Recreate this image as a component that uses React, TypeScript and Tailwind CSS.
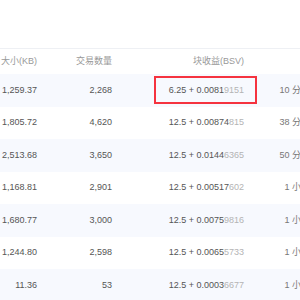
import React from 'react';

interface BlockRow {
  size: string;
  txCount: string;
  reward: string;
  feeStrong: string;
  feeLight: string;
  time: string;
}

const rows: BlockRow[] = [
  { size: '1,259.37', txCount: '2,268', reward: '6.25', feeStrong: '0.0081', feeLight: '9151', time: '10 分钟前' },
  { size: '1,805.72', txCount: '4,620', reward: '12.5', feeStrong: '0.00874', feeLight: '815', time: '38 分钟前' },
  { size: '2,513.68', txCount: '3,650', reward: '12.5', feeStrong: '0.0144', feeLight: '6365', time: '50 分钟前' },
  { size: '1,168.81', txCount: '2,901', reward: '12.5', feeStrong: '0.00517', feeLight: '602', time: '1 小时前' },
  { size: '1,680.77', txCount: '3,000', reward: '12.5', feeStrong: '0.0075', feeLight: '9816', time: '1 小时前' },
  { size: '1,244.80', txCount: '2,598', reward: '12.5', feeStrong: '0.0065', feeLight: '5733', time: '1 小时前' },
  { size: '11.36', txCount: '53', reward: '12.5', feeStrong: '0.0003', feeLight: '6677', time: '1 小时前' },
];

const cols = 'grid grid-cols-[37px_75px_132px_75px] items-center';

export default function App() {
  return (
    <div
      className="w-[300px] h-[300px] overflow-hidden bg-white text-[9px] text-[#555]"
      style={{ fontFamily: '"Liberation Sans", "Noto Sans CJK SC", sans-serif' }}
    >
      <div className="h-[48px]" />
      <div className={`${cols} h-[26px] border-t border-[#eef0f4] text-[#999]`}>
        <div className="text-right whitespace-nowrap">大小(KB)</div>
        <div className="text-right">交易数量</div>
        <div className="text-right">块收益(BSV)</div>
        <div />
      </div>
      {rows.map((r, i) => (
        <div
          key={i}
          className={`${cols} h-[32.5px] ${i % 2 === 0 ? 'bg-[#f7f9fe]' : 'bg-white'}`}
        >
          <div className="text-right whitespace-nowrap">{r.size}</div>
          <div className="text-right">{r.txCount}</div>
          <div className="relative h-full flex items-center justify-end whitespace-nowrap">
            {/* highlight annotation on the newest block */}
            {i === 0 && (
              <div className="absolute left-[42px] right-[-13px] top-[2px] bottom-[3px] border-2 border-[#f5333f]" />
            )}
            <span>
              {r.reward} + {r.feeStrong}
              <span className="text-[#b4b4b4]">{r.feeLight}</span>
            </span>
          </div>
          <div className="text-right whitespace-nowrap text-[#777]">{r.time}</div>
        </div>
      ))}
    </div>
  );
}
